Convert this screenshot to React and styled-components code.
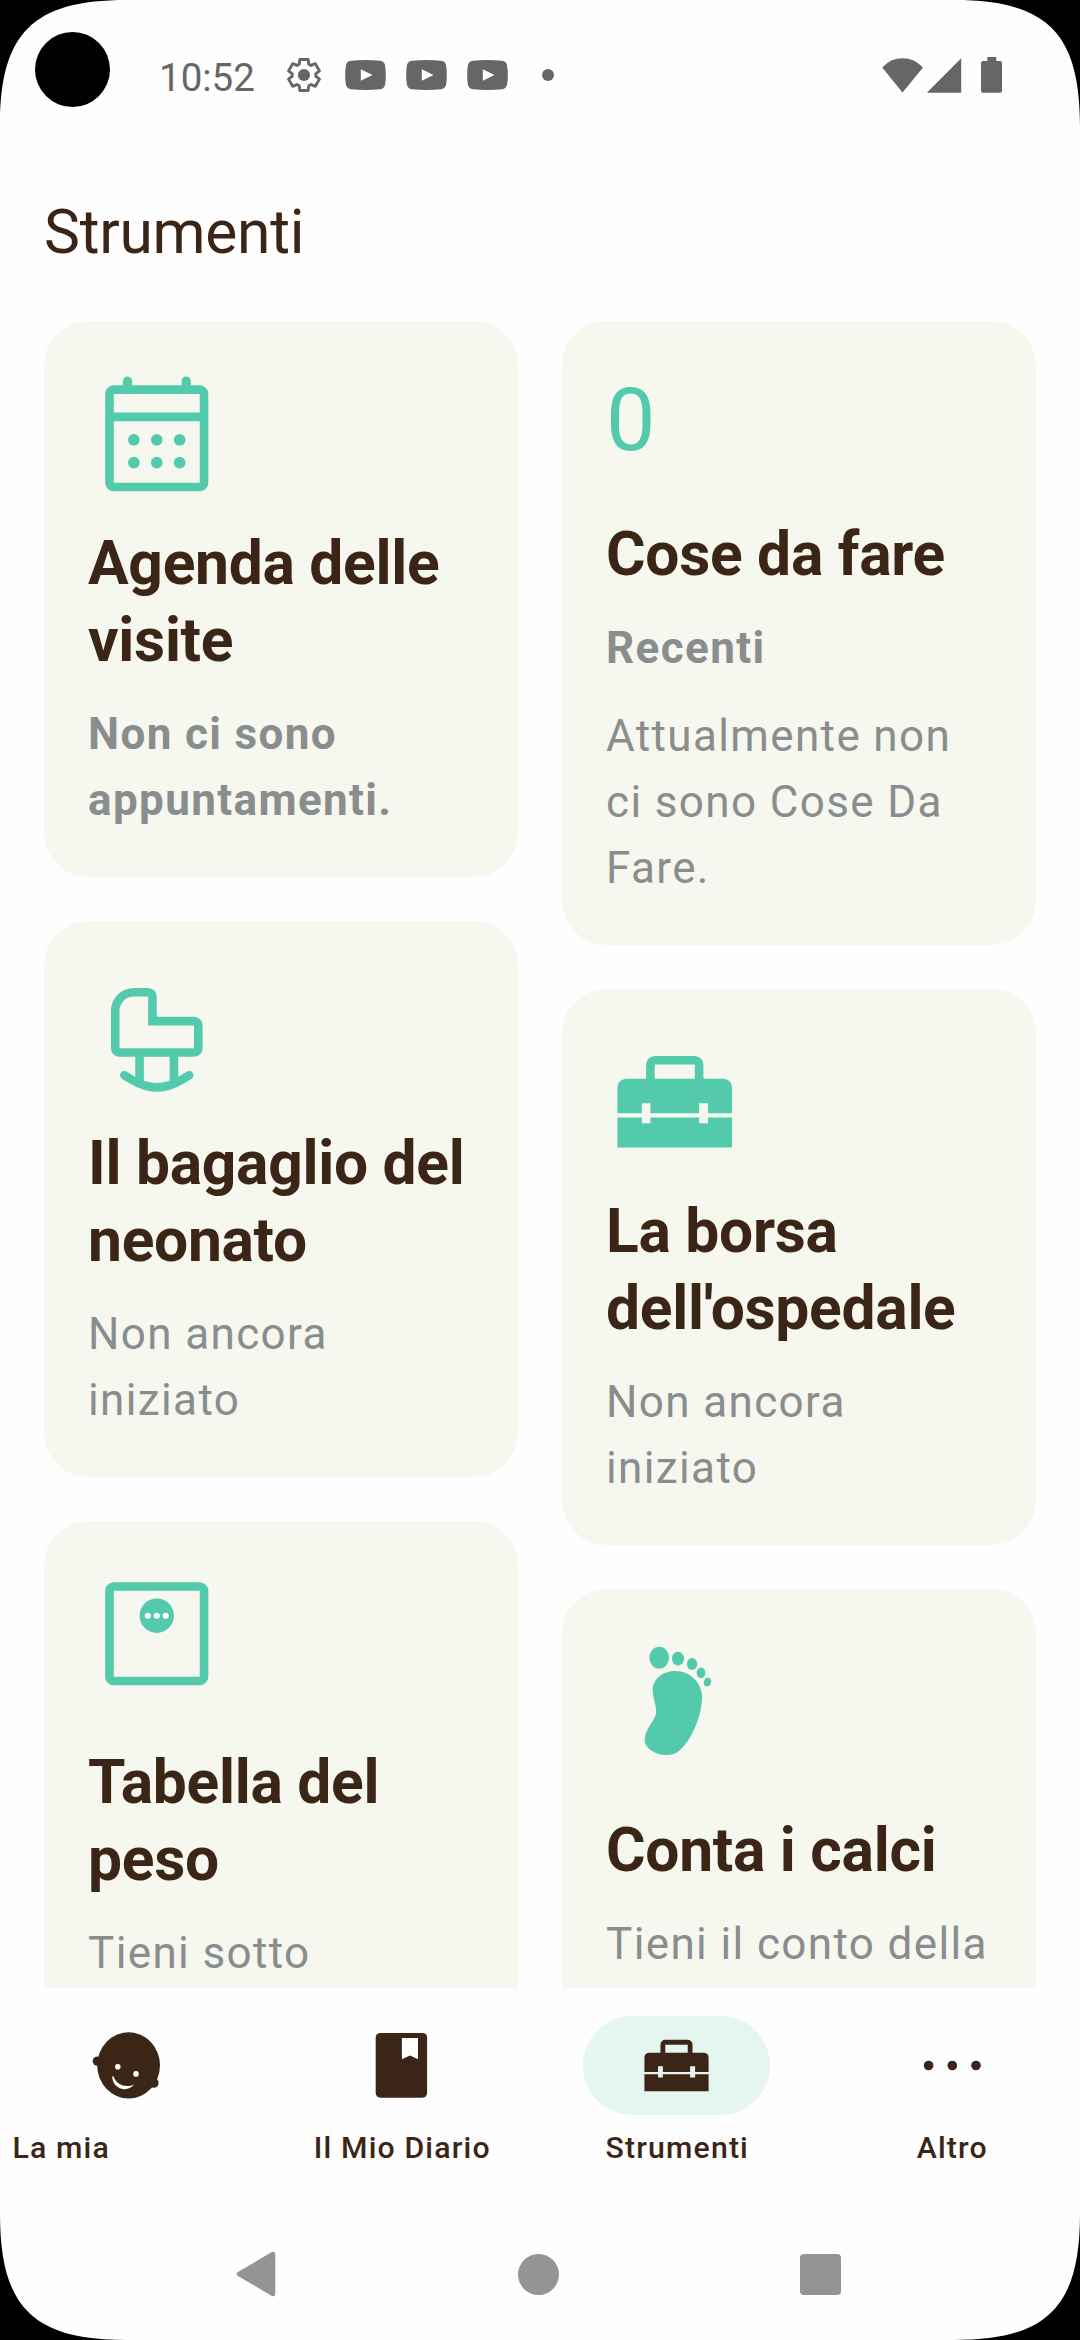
import React from "react";
import styled, { createGlobalStyle } from "styled-components";

const BriefcaseIcon = ({ size }) => (
  <svg width={size} height={size} viewBox="0 0 24 24" fill="currentColor">
    <path d="M7.75 8.5V5.5a.75.75 0 0 1 .75-.75h7a.75.75 0 0 1 .75.75v3" fill="none" stroke="currentColor" strokeWidth="1.5" />
    <path d="M3.5 8h17A1.5 1.5 0 0 1 22 9.5V14h-4.2v-1.75h-1.55V14h-8.5v-1.75h-1.5V14H2V9.5A1.5 1.5 0 0 1 3.5 8z" />
    <path d="M2 14.75h4.25v1h1.5v-1h8.5v1h1.55v-1H22V20H2z" />
  </svg>
);

const CalendarIcon = () => (
  <svg width="137.5" height="137.5" viewBox="0 0 24 24" fill="none" stroke="currentColor" strokeWidth="1.5">
    <rect x="3.75" y="4.3" width="16.5" height="17" rx="0.75" />
    <path d="M3.75 9.05h16.5" />
    <path d="M6.9 4.3V2.8M17.15 4.3V2.8" strokeWidth="1.6" strokeLinecap="round" />
    <g fill="currentColor" stroke="none">
      {[8, 12, 16].map((x) => (
        <React.Fragment key={x}>
          <circle cx={x} cy="13.05" r="1.02" />
          <circle cx={x} cy="17.05" r="1.02" />
        </React.Fragment>
      ))}
    </g>
  </svg>
);

const CradleIcon = () => (
  <svg width="137.5" height="137.5" viewBox="0 0 24 24" fill="none" stroke="currentColor" strokeWidth="1.5">
    <path d="M4.75 8A3.25 3.25 0 0 1 8 4.75h2.5a.75.75 0 0 1 .75.75v4.3h7.25a.75.75 0 0 1 .75.75v3.98a.75.75 0 0 1-.75.75h-13a.75.75 0 0 1-.75-.75z" />
    <path d="M9 15.3v5.4M15 15.3v5.4" />
    <path d="M6.35 19.25L7.6 20Q12 22.7 16.4 20l1.25-.75" strokeLinecap="round" />
  </svg>
);

const ScaleIcon = () => (
  <svg width="137.5" height="137.5" viewBox="0 0 24 24">
    <rect x="3.75" y="3.75" width="16.5" height="16.5" rx="0.75" fill="none" stroke="currentColor" strokeWidth="1.5" />
    <circle cx="12" cy="8.85" r="3" fill="currentColor" />
    <circle cx="10.44" cy="8.85" r="0.53" fill="#fff" />
    <circle cx="12" cy="8.85" r="0.53" fill="#fff" />
    <circle cx="13.56" cy="8.85" r="0.53" fill="#fff" />
  </svg>
);

const FootIcon = () => (
  <svg width="137.5" height="137.5" viewBox="0 0 137.5 137.5" fill="currentColor">
    <ellipse cx="53.2" cy="24.7" rx="9.8" ry="10.9" />
    <ellipse cx="72" cy="25.6" rx="6.1" ry="6.8" />
    <ellipse cx="86.1" cy="31" rx="5.2" ry="6.1" />
    <ellipse cx="95" cy="39.7" rx="4.4" ry="5.3" />
    <ellipse cx="101.5" cy="49.1" rx="3.6" ry="4.4" transform="rotate(15 101.5 49.1)" />
    <path d="M69.3 38C85 38 96 50.5 96 63.7C96 80 88 103 76 115C71 120.5 66 122 60 122C51 122 38.7 116 38.7 107C38.7 95 50.2 87 50.2 79C50.2 71 46.7 65 46.7 57C46.7 46 57 38 69.3 38z" />
  </svg>
);

const BabyIcon = () => (
  <svg width="77" height="77" viewBox="0 0 77 77" fill="currentColor">
    <ellipse cx="40.6" cy="38.3" rx="31.4" ry="33.1" />
    <circle cx="9.4" cy="34.1" r="4.7" />
    <circle cx="65.8" cy="56" r="4.8" />
    <circle cx="29.8" cy="39.7" r="2.8" fill="#fff" />
    <circle cx="48" cy="46.9" r="2.8" fill="#fff" />
    <path d="M24.3 49.3C23.5 60 38 67.5 46.2 57.6C37.5 61.3 28.500 58 25.6 49.600z" fill="#fff" />
  </svg>
);

const DiaryIcon = () => (
  <svg width="77" height="77" viewBox="0 0 77 77">
    <rect x="12.7" y="6" width="51.4" height="64.7" rx="4.6" fill="currentColor" />
    <path d="M38.9 11H55v21.3l-8-3.7-8.1 3.7z" fill="#fff" />
  </svg>
);

const MoreIcon = () => (
  <svg width="77" height="77" viewBox="0 0 77 77" fill="currentColor">
    <circle cx="15.6" cy="38.5" r="4.8" />
    <circle cx="39.3" cy="38.5" r="4.8" />
    <circle cx="63" cy="38.5" r="4.8" />
  </svg>
);

// six teeth, each one drawn as root - tip - tip - root
const gearPoints = [0, 60, 120, 180, 240, 300]
  .flatMap((tooth) => [
    [tooth - 24, 11.8],
    [tooth - 15, 16],
    [tooth + 15, 16],
    [tooth + 24, 11.8],
  ])
  .map(([angle, radius]) => {
    const rad = (angle * Math.PI) / 180;
    return `${(18 + radius * Math.sin(rad)).toFixed(2)},${(18 - radius * Math.cos(rad)).toFixed(2)}`;
  })
  .join(" ");

const GearIcon = () => (
  <svg width="36" height="36" viewBox="0 0 36 36">
    <polygon points={gearPoints} fill="none" stroke="currentColor" strokeWidth="2.9" strokeLinejoin="round" />
    <circle cx="18" cy="18" r="6.1" fill="currentColor" />
  </svg>
);

const VideoIcon = () => (
  <svg width="41" height="30" viewBox="0 0 41 30">
    <path d="M6 .8Q20.5-.6 35 .8Q39.5 1.2 40.2 6Q41.4 15 40.2 24Q39.5 28.8 35 29.2Q20.5 30.6 6 29.2Q1.5 28.8 .8 24Q-.4 15 .8 6Q1.5 1.2 6 .8z" fill="currentColor" />
    <path d="M15.8 9.2v11.6L27.5 15z" fill="#fff" />
  </svg>
);

const SignalIcons = () => (
  <svg width="122" height="38" viewBox="0 0 122 38" fill="currentColor">
    <path d="M.2 11.5Q8.5 2.3 20.5 2.3T41 11.5L20.5 36.5z" />
    <path d="M79.2 2.3V36.7H44.8z" />
    <path d="M105.3 1h9v4h3.700a2 2 0 0 1 2 2v27.7a2 2 0 0 1-2 2h-17a2 2 0 0 1-2-2V7a2 2 0 0 1 2-2h4.3z" />
  </svg>
);

const leftTools = [
  {
    icon: <CalendarIcon />,
    title: "Agenda delle visite",
    strong: "Non ci sono appuntamenti.",
  },
  {
    icon: <CradleIcon />,
    title: "Il bagaglio del neonato",
    text: "Non ancora iniziato",
  },
  {
    icon: <ScaleIcon />,
    title: "Tabella del peso",
    text: "Tieni sotto",
    spaced: true,
  },
];

const rightTools = [
  {
    count: 0,
    title: "Cose da fare",
    strong: "Recenti",
    text: "Attualmente non ci sono Cose Da Fare.",
    spaced: true,
  },
  {
    icon: <BriefcaseIcon size="137.5" />,
    title: "La borsa dell'ospedale",
    text: "Non ancora iniziato",
  },
  {
    icon: <FootIcon />,
    title: "Conta i calci",
    text: "Tieni il conto della",
    spaced: true,
  },
];

const tabs = [
  { icon: <BabyIcon />, label: "La mia", align: "left" },
  { icon: <DiaryIcon />, label: "Il Mio Diario" },
  { icon: <BriefcaseIcon size="77" />, label: "Strumenti", active: true },
  { icon: <MoreIcon />, label: "Altro" },
];

const ToolCard = ({ tool }) => (
  <Card>
    {tool.icon ? <CardIcon>{tool.icon}</CardIcon> : <CardCount>{tool.count}</CardCount>}
    <CardTitle $spaced={tool.spaced}>{tool.title}</CardTitle>
    {tool.strong && <CardText $bold>{tool.strong}</CardText>}
    {tool.text && <CardText>{tool.text}</CardText>}
  </Card>
);

const App = () => {
  return (
    <Screen>
      <GlobalStyle />
      <StatusBar>
        <Clock>10:52</Clock>
        <GearIcon />
        <Notifications>
          <VideoIcon />
          <VideoIcon />
          <VideoIcon />
        </Notifications>
        <MoreDot />
        <SystemStatus>
          <SignalIcons />
        </SystemStatus>
      </StatusBar>
      <PageTitle>Strumenti</PageTitle>
      <Tools>
        <Column>
          {leftTools.map((tool) => (
            <ToolCard key={tool.title} tool={tool} />
          ))}
        </Column>
        <Column>
          {rightTools.map((tool) => (
            <ToolCard key={tool.title} tool={tool} />
          ))}
        </Column>
      </Tools>
      <TabBar>
        {tabs.map((tab) => (
          <Tab key={tab.label}>
            <TabPill $active={tab.active}>{tab.icon}</TabPill>
            <TabLabel $align={tab.align}>{tab.label}</TabLabel>
          </Tab>
        ))}
      </TabBar>
      <SystemNav>
        <svg width="42" height="46" viewBox="0 0 42 46">
          <path d="M4 23L38 3V43z" fill="#949494" stroke="#949494" strokeWidth="4.5" strokeLinejoin="round" />
        </svg>
        <HomeButton />
        <RecentsButton />
      </SystemNav>
      <Camera />
      {["0deg", "90deg", "180deg", "270deg"].map((turn, i) => (
        <Corner key={turn} $turn={turn} $right={i === 1 || i === 2} $bottom={i > 1} viewBox="0 0 128 128">
          <path d="M0 0H126C33 0 0 33 0 126z" />
        </Corner>
      ))}
    </Screen>
  );
};

export default App;

const GlobalStyle = createGlobalStyle`
  * {
    box-sizing: border-box;
  }
  body {
    margin: 0;
    background: #fff;
    font-family: Roboto, "Liberation Sans", sans-serif;
  }
  svg {
    display: block;
    flex: none;
  }
`;

const Screen = styled.div`
  position: relative;
  display: flex;
  flex-direction: column;
  width: 1080px;
  height: 2340px;
  overflow: hidden;
  background: #fefefe;
  color: #3b2516;
`;

const StatusBar = styled.div`
  display: flex;
  align-items: center;
  height: 150px;
  padding: 0 76px 0 159px;
  color: #666;
`;

const Clock = styled.span`
  width: 127px;
  padding-top: 5px;
  font-size: 38.5px;
  line-height: 46px;
`;

const Notifications = styled.div`
  display: flex;
  align-items: center;
  gap: 20px;
  margin-left: 23px;
`;

const MoreDot = styled.span`
  width: 12px;
  height: 12px;
  margin-left: 34px;
  border-radius: 50%;
  background: #666;
`;

const SystemStatus = styled.div`
  margin-left: auto;
`;

const PageTitle = styled.h1`
  margin: 44px 44px 50px;
  font-size: 60.5px;
  font-weight: 400;
  letter-spacing: -0.28px;
  line-height: 77px;
`;

const Tools = styled.main`
  display: flex;
  flex: 1;
  gap: 44px;
  min-height: 0;
  padding: 0 44px;
  overflow: hidden;
`;

const Column = styled.div`
  display: flex;
  flex-direction: column;
  gap: 44px;
  width: 474px;
`;

const Card = styled.article`
  flex: none;
  min-height: 556px;
  padding: 44px;
  border-radius: 44px;
  background: #f6f7ee;
`;

const CardIcon = styled.div`
  color: #54caac;
`;

const CardCount = styled.div`
  color: #54caac;
  font-size: 88px;
  line-height: 110px;
`;

const CardTitle = styled.h2`
  margin: ${(props) => (props.$spaced ? "41px" : "22px")} 0 0;
  font-size: 60.5px;
  font-weight: 700;
  letter-spacing: -0.28px;
  line-height: 77px;
`;

const CardText = styled.p`
  margin: 22px 0 0;
  color: #8a8d8e;
  font-size: 44px;
  font-weight: ${(props) => (props.$bold ? 700 : 400)};
  letter-spacing: 1.375px;
  line-height: 66px;
`;

const TabBar = styled.nav`
  display: flex;
  flex: none;
  width: 1100px;
  height: 220px;
  margin: 0 -11px;
  padding-top: 28px;
`;

const Tab = styled.div`
  display: flex;
  flex-direction: column;
  align-items: center;
  width: 275px;
`;

const TabPill = styled.div`
  display: flex;
  align-items: center;
  justify-content: center;
  width: 187px;
  height: 99px;
  border-radius: 50px;
  background: ${(props) => (props.$active ? "#e5f6f1" : "transparent")};
`;

const TabLabel = styled.span`
  width: 231px;
  margin-top: 11px;
  padding-left: 1.5px;
  font-size: 30.25px;
  font-weight: 500;
  letter-spacing: 1.15px;
  line-height: 44px;
  text-align: ${(props) => props.$align || "center"};
`;

const SystemNav = styled.div`
  display: flex;
  flex: none;
  align-items: center;
  justify-content: space-between;
  height: 132px;
  padding: 0 239px 0 235px;
`;

const HomeButton = styled.span`
  width: 41px;
  height: 41px;
  border-radius: 50%;
  background: #949494;
`;

const RecentsButton = styled.span`
  width: 41px;
  height: 41px;
  border-radius: 4px;
  background: #949494;
`;

const Camera = styled.span`
  position: absolute;
  top: 32px;
  left: 35px;
  width: 75px;
  height: 75px;
  border-radius: 50%;
  background: #000;
`;

const Corner = styled.svg`
  position: absolute;
  ${(props) => (props.$bottom ? "bottom" : "top")}: 0;
  ${(props) => (props.$right ? "right" : "left")}: 0;
  width: 128px;
  height: 128px;
  transform: rotate(${(props) => props.$turn});
`;
